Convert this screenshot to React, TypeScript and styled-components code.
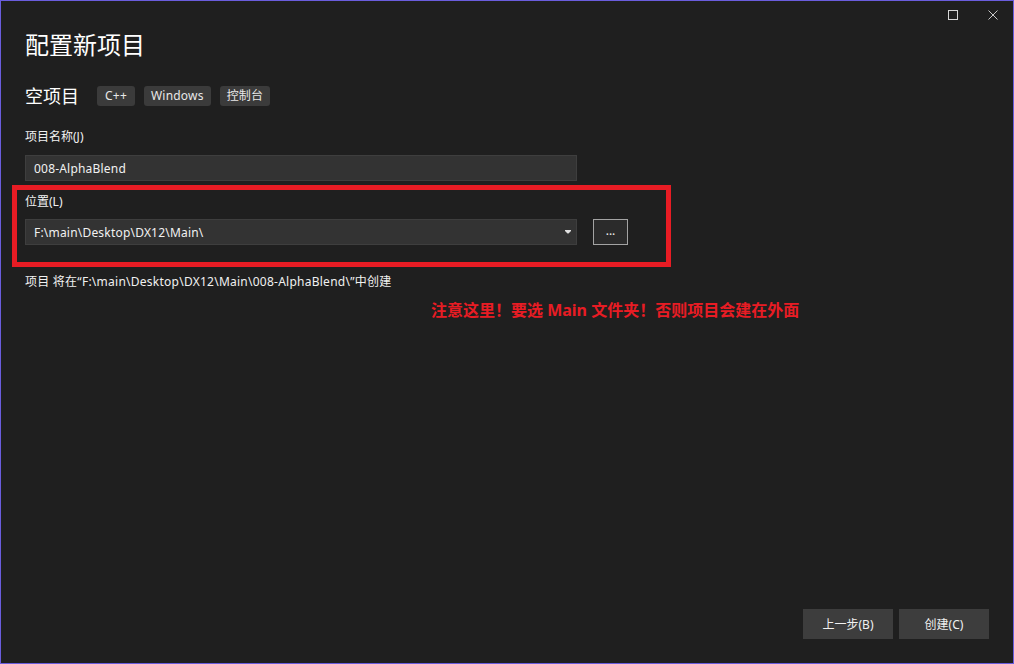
import React from "react";
import styled, { createGlobalStyle } from "styled-components";

const Global = createGlobalStyle`
  html, body { margin: 0; padding: 0; background: #1f1f1f; }
  * { box-sizing: border-box; }
  body { font-family: "Noto Sans", "Noto Sans CJK SC", sans-serif; }
`;

const Window = styled.div`
  width: 1014px;
  height: 664px;
  border: 1px solid #6a5ddd;
  background: #1f1f1f;
  display: flex;
  flex-direction: column;
  color: #f1f1f1;
  font-family: "Noto Sans", "Noto Sans CJK SC", sans-serif;
`;

const TitleBar = styled.div`
  height: 28px;
  display: flex;
  justify-content: flex-end;
`;

const TitleButton = styled.div`
  width: 40px;
  height: 28px;
  display: flex;
  align-items: center;
  justify-content: center;
`;

const Content = styled.div`
  flex: 1;
  display: flex;
  flex-direction: column;
  padding: 0 24px 24px 24px;
`;

const Title = styled.h1`
  margin: 0;
  font-size: 24px;
  line-height: 32px;
  font-weight: 400;
  color: #ffffff;
`;

const SubRow = styled.div`
  margin-top: 25px;
  height: 20px;
  display: flex;
  align-items: center;
`;

const SubTitle = styled.span`
  font-size: 18px;
  line-height: 20px;
  color: #ffffff;
  margin-right: 18px;
`;

const Tag = styled.span`
  height: 20px;
  min-width: 38px;
  text-align: center;
  padding: 0 7px;
  margin-right: 9px;
  background: #3b3b3b;
  border-radius: 3px;
  font-size: 12px;
  line-height: 20px;
  letter-spacing: 0.2px;
  color: #e8e8e8;
`;

const Label = styled.div<{ $top: number }>`
  margin-top: ${(p) => p.$top}px;
  font-size: 12px;
  line-height: 16px;
  color: #f1f1f1;
`;

const InputBox = styled.div`
  width: 552px;
  height: 26px;
  background: #333333;
  border: 1px solid #3e3e3e;
  display: flex;
  align-items: center;
  padding: 0 5px 0 8px;
  font-size: 12px;
  letter-spacing: 0.2px;
  color: #f1f1f1;
`;

const InputText = styled.span`
  flex: 1;
`;

const Field = styled.div<{ $top: number }>`
  margin-top: ${(p) => p.$top}px;
  display: flex;
  align-items: center;
`;

const BrowseButton = styled.div`
  margin-left: 16px;
  width: 35px;
  height: 26px;
  border: 1px solid #a3a3a3;
  background: #2b2b2b;
  display: flex;
  align-items: center;
  justify-content: center;
  font-size: 12px;
  line-height: 12px;
  padding-bottom: 2px;
  color: #f1f1f1;
`;

const Highlight = styled.div`
  margin: 4px 0 0 -13px;
  width: 659px;
  height: 82px;
  border: 5px solid #e81c24;
  padding: 4px 0 0 8px;
`;

const Note = styled.div`
  margin-top: 7px;
  font-size: 12px;
  line-height: 16px;
  letter-spacing: 0.25px;
  color: #f1f1f1;
`;

const Warning = styled.div`
  margin: 10px 0 0 406px;
  font-size: 16px;
  line-height: 20px;
  font-weight: 700;
  color: #e81c24;
`;

const Footer = styled.div`
  margin-top: auto;
  display: flex;
  justify-content: flex-end;
  gap: 6px;
`;

const FooterButton = styled.div`
  width: 90px;
  height: 30px;
  background: #3d3d3d;
  display: flex;
  align-items: center;
  justify-content: center;
  font-size: 12px;
  color: #f1f1f1;
`;

export default function App() {
  return (
    <>
      <Global />
      <Window>
        <TitleBar>
          <TitleButton>
            <svg width="10" height="10" viewBox="0 0 10 10">
              <rect x="0.5" y="0.5" width="9" height="9" fill="none" stroke="#d6d6d6" strokeWidth="1" />
            </svg>
          </TitleButton>
          <TitleButton>
            <svg width="10" height="10" viewBox="0 0 10 10">
              <path d="M0.5 0.5 L9.5 9.5 M9.5 0.5 L0.5 9.5" stroke="#c8c8c8" strokeWidth="1" />
            </svg>
          </TitleButton>
        </TitleBar>
        <Content>
          <Title>配置新项目</Title>
          <SubRow>
            <SubTitle>空项目</SubTitle>
            <Tag>C++</Tag>
            <Tag>Windows</Tag>
            <Tag>控制台</Tag>
          </SubRow>
          <Label $top={23}>项目名称(J)</Label>
          <Field $top={10}>
            <InputBox>
              <InputText>008-AlphaBlend</InputText>
            </InputBox>
          </Field>
          <Highlight>
            <Label $top={0}>位置(L)</Label>
            <Field $top={9}>
              <InputBox>
                <InputText>F:\main\Desktop\DX12\Main\</InputText>
                <svg width="6" height="4" viewBox="0 0 6 4">
                  <path d="M0 0 H6 V1 L3.5 3.5 H2.5 L0 1 Z" fill="#e0e0e0" />
                </svg>
              </InputBox>
              <BrowseButton>...</BrowseButton>
            </Field>
          </Highlight>
          <Note>项目 将在“F:\main\Desktop\DX12\Main\008-AlphaBlend\”中创建</Note>
          <Warning>注意这里！要选 Main 文件夹！否则项目会建在外面</Warning>
          <Footer>
            <FooterButton>上一步(B)</FooterButton>
            <FooterButton>创建(C)</FooterButton>
          </Footer>
        </Content>
      </Window>
    </>
  );
}
